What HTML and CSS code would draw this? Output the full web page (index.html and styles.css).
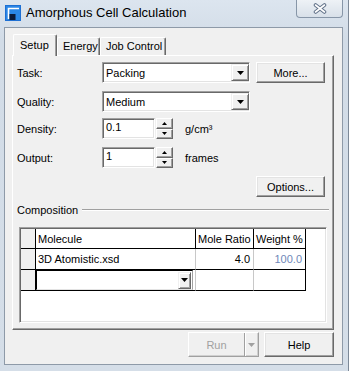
FILE: index.html
```html
<!DOCTYPE html>
<html>
  <head>
    <meta charset="UTF-8" />
    <title>Amorphous Cell Calculation</title>
    <link rel="stylesheet" href="styles.css">
  </head>
  <body>
    <div class="window">
      <div class="titlebar">
        <svg class="app-icon" width="16" height="16" viewBox="0 0 16 16">
          <rect x="0" y="0" width="16" height="16" fill="#1d6fd3" />
          <rect x="1" y="1" width="14" height="14" fill="#2a86e6" />
          <path d="M3.5 14 V3.5 H14" fill="none" stroke="#fff" stroke-width="1.6" />
          <rect x="4.5" y="9" width="6" height="6" fill="#0b1a3a" />
        </svg>
        <span class="title">Amorphous Cell Calculation</span>
        <div class="close">
          <svg width="14" height="11" viewBox="0 0 14 11">
            <path d="M2.5 2 L11.5 9 M11.5 2 L2.5 9" stroke="#63738a" stroke-width="3.6" stroke-linecap="round" />
            <path d="M2.5 2 L11.5 9 M11.5 2 L2.5 9" stroke="#fff" stroke-width="1.6" stroke-linecap="round" />
          </svg>
        </div>
      </div>

      <div class="client">
        <div class="tabs">
          <div class="tab tab-setup active">Setup</div>
          <div class="tab tab-energy">Energy</div>
          <div class="tab tab-job">Job Control</div>
        </div>

        <div class="page">
          <div class="row row-task">
            <span class="label">Task:</span>
            <div class="combo"><span class="combo-text">Packing</span><span class="drop"><svg width="7" height="4"><polygon points="0,0 7,0 3.5,4" /></svg></span></div>
            <button class="btn side-btn" type="button">More...</button>
          </div>
          <div class="row row-quality">
            <span class="label">Quality:</span>
            <div class="combo"><span class="combo-text">Medium</span><span class="drop"><svg width="7" height="4"><polygon points="0,0 7,0 3.5,4" /></svg></span></div>
          </div>
          <div class="row row-density">
            <span class="label">Density:</span>
            <div class="textbox">0.1</div>
            <div class="spin">
              <span class="spin-btn"><svg width="5" height="3"><polygon points="2.5,0 5,3 0,3" /></svg></span>
              <span class="spin-btn"><svg width="5" height="3"><polygon points="0,0 5,0 2.5,3" /></svg></span>
            </div>
            <span class="unit">g/cm³</span>
          </div>
          <div class="row row-output">
            <span class="label">Output:</span>
            <div class="textbox">1</div>
            <div class="spin">
              <span class="spin-btn"><svg width="5" height="3"><polygon points="2.5,0 5,3 0,3" /></svg></span>
              <span class="spin-btn"><svg width="5" height="3"><polygon points="0,0 5,0 2.5,3" /></svg></span>
            </div>
            <span class="unit">frames</span>
          </div>
          <div class="row row-options">
            <button class="btn side-btn options-btn" type="button">Options...</button>
          </div>

          <div class="group-title">
            <span>Composition</span>
            <span class="etched"></span>
          </div>

          <div class="grid-box">
            <table class="grid">
              <colgroup>
                <col class="c-hdr" />
                <col class="c-mol" />
                <col class="c-ratio" />
                <col class="c-weight" />
              </colgroup>
              <tr class="head">
                <td class="rowhdr"></td>
                <td>Molecule</td>
                <td>Mole Ratio</td>
                <td class="last">Weight %</td>
              </tr>
              <tr class="data">
                <td class="rowhdr"></td>
                <td>3D Atomistic.xsd</td>
                <td class="num">4.0</td>
                <td class="num last weight">100.0</td>
              </tr>
              <tr class="data current">
                <td class="rowhdr"></td>
                <td class="editor-cell">
                  <div class="cell-combo"><span class="drop small"><svg width="7" height="4"><polygon points="0,0 7,0 3.5,4" /></svg></span></div>
                </td>
                <td></td>
                <td class="last"></td>
              </tr>
            </table>
          </div>
        </div>

        <div class="actions">
          <div class="split disabled">
            <span class="split-main">Run</span>
            <span class="split-drop"><svg width="7" height="4"><polygon points="0,0 7,0 3.5,4" /></svg></span>
          </div>
          <button class="btn help-btn" type="button">Help</button>
        </div>
      </div>
    </div>
  </body>
</html>
```

FILE: styles.css
```css
* {
  box-sizing: border-box;
}
body {
  margin: 0;
  background: #fff;
  font-family: "Liberation Sans", Arial, sans-serif;
  font-size: 11px;
  color: #000;
}
.window {
  width: 349px;
  height: 371px;
  background: linear-gradient(#dce5ef, #d2dce7 40px, #d5dee8);
  border-right: 1px solid #7d8998;
  display: flex;
  flex-direction: column;
}
.titlebar {
  height: 27px;
  display: flex;
  align-items: flex-start;
}
.app-icon {
  margin: 5px 0 0 5px;
}
.title {
  margin: 4px 0 0 5px;
  font-size: 13px;
  line-height: 17px;
}
.close {
  margin-left: auto;
  margin-right: 5px;
  width: 47px;
  height: 18px;
  border: 1px solid #8796a8;
  border-top: 0;
  border-radius: 0 0 4px 4px;
  background: linear-gradient(#eef2f6, #d8e0e9);
  display: flex;
  align-items: center;
  justify-content: center;
}
.client {
  margin-left: 4px;
  width: 339px;
  height: 338px;
  border: 1px solid #8e9aa8;
  background: #f0f0f0;
  display: flex;
  flex-direction: column;
}

/* tabs */
.tabs {
  display: flex;
  align-items: flex-end;
  height: 27px;
  padding-left: 8px;
}
.tab {
  height: 18px;
  padding: 2px 0 0 5px;
  border: 1px solid;
  border-color: #fff #696969 transparent #fff;
  border-bottom: 0;
  border-radius: 2px 2px 0 0;
  box-shadow: inset -1px 0 #a0a0a0;
  line-height: 13px;
}
.tab.active {
  height: 22px;
  margin-bottom: -1px;
  padding: 4px 0 0 6px;
  position: relative;
  z-index: 1;
  background: #f0f0f0;
}
.tab-setup { width: 44px; }
.tab-energy { width: 43px; }
.tab-job { width: 66px; }

.page {
  margin-left: 7px;
  width: 322px;
  height: 275px;
  border: 1px solid;
  border-color: #fff #696969 #696969 #fff;
  box-shadow: inset -1px -1px #a0a0a0;
  padding: 6px 0 0 4px;
}

/* form rows */
.row {
  display: flex;
  align-items: center;
  height: 21px;
}
.row-quality { margin-top: 8px; }
.row-density { margin-top: 6px; }
.row-output { margin-top: 8px; }
.row-options { margin-top: 8px; }
.label {
  width: 85px;
}
.combo {
  width: 148px;
  height: 21px;
  display: flex;
  align-items: center;
  background: #fff;
  border: 1px solid;
  border-color: #a0a0a0 #fff #fff #a0a0a0;
  box-shadow: inset 1px 1px #696969, inset -1px -1px #e3e3e3;
}
.combo-text {
  flex: 1;
  padding-left: 3px;
}
.drop {
  width: 18px;
  height: 17px;
  display: flex;
  align-items: center;
  justify-content: center;
  background: #f0f0f0;
  border: 1px solid;
  border-color: #f0f0f0 #696969 #696969 #f0f0f0;
  box-shadow: inset 1px 1px #fff, inset -1px -1px #a0a0a0;
}
.drop.small {
  width: 13px;
  height: 17px;
}
.btn {
  font: inherit;
  color: #000;
  background: #f0f0f0;
  border: 1px solid;
  border-color: #fff #696969 #696969 #fff;
  box-shadow: inset -1px -1px #a0a0a0, inset 1px 1px #e3e3e3;
  padding: 0;
}
.side-btn {
  width: 69px;
  height: 21px;
  margin-left: 6px;
}
.options-btn {
  margin-left: 239px;
}
.textbox {
  width: 53px;
  height: 21px;
  line-height: 17px;
  padding-left: 3px;
  background: #fff;
  border: 1px solid;
  border-color: #a0a0a0 #fff #fff #a0a0a0;
  box-shadow: inset 1px 1px #696969, inset -1px -1px #e3e3e3;
}
.spin {
  width: 17px;
  height: 21px;
  margin-left: 1px;
  display: flex;
  flex-direction: column;
}
.spin-btn {
  flex: 1;
  display: flex;
  align-items: center;
  justify-content: center;
  background: #f0f0f0;
  border: 1px solid;
  border-color: #fff #696969 #696969 #fff;
  box-shadow: inset -1px -1px #a0a0a0;
}
.unit {
  margin-left: 12px;
}

/* composition */
.group-title {
  display: flex;
  align-items: center;
  height: 14px;
  margin-top: 6px;
  margin-right: 4px;
}
.etched {
  flex: 1;
  margin-left: 4px;
  height: 2px;
  border-top: 1px solid #a0a0a0;
  border-bottom: 1px solid #fff;
}
.grid-box {
  margin: 10px 0 0 2px;
  width: 308px;
  height: 96px;
  padding: 1px 0 0 1px;
  background: #fff;
  border: 1px solid;
  border-color: #a0a0a0 #fff #fff #a0a0a0;
  box-shadow: inset 1px 1px #696969, inset -1px -1px #e3e3e3;
}
.grid {
  border-collapse: separate;
  border-spacing: 0;
  table-layout: fixed;
  width: 285px;
}
.c-hdr { width: 15px; }
.c-mol { width: 160px; }
.c-ratio { width: 58px; }
.c-weight { width: 52px; }
.grid td {
  padding: 0 3px 0 2px;
  border-right: 1px solid #c8c8c8;
  border-bottom: 1px solid #000;
  white-space: nowrap;
  overflow: hidden;
}
.grid .head td {
  height: 20px;
  border-right-color: #000;
}
.grid .data td {
  height: 21px;
}
.grid td.last {
  border-right-color: #000;
}
.grid td.rowhdr {
  background: #f0f0f0;
  border-right-color: #000;
}
.grid td.num {
  text-align: right;
}
.grid td.weight {
  color: #6f88b9;
}
.grid td.editor-cell {
  padding: 0 2px 0 0;
}
.cell-combo {
  height: 20px;
  display: flex;
  justify-content: flex-end;
  align-items: center;
  padding-right: 1px;
  border: 1px solid;
  border-color: #000 #a0a0a0 #e3e3e3 #000;
}

/* bottom buttons */
.actions {
  display: flex;
  justify-content: flex-end;
  gap: 5px;
  margin-top: 2px;
  padding-right: 8px;
}
.split {
  width: 71px;
  height: 25px;
  display: flex;
  border: 1px solid;
  border-color: #fff #a0a0a0 #a0a0a0 #fff;
  box-shadow: inset -1px -1px #d0d0d0;
}
.split.disabled {
  color: #a0a0a0;
}
.split-main {
  flex: 1;
  display: flex;
  align-items: center;
  justify-content: center;
}
.split-drop {
  width: 14px;
  display: flex;
  align-items: center;
  justify-content: center;
  border-left: 1px solid #a0a0a0;
  box-shadow: inset 1px 0 #fff;
}
.split-drop polygon {
  fill: #a0a0a0;
}
.help-btn {
  width: 70px;
  height: 25px;
}
```
